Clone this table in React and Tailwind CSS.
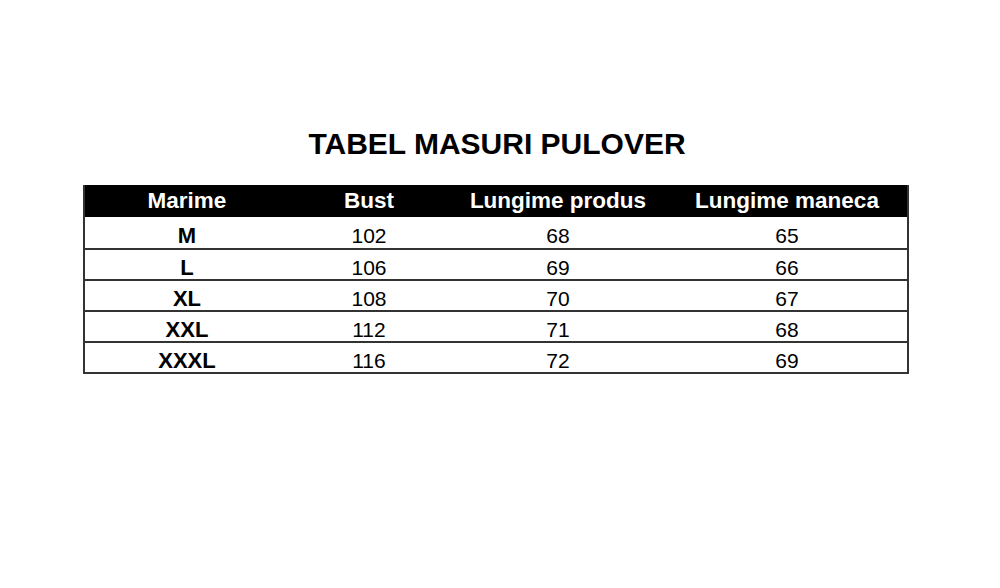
import React from "react";

const rows = [
  { size: "M", bust: 102, length: 68, sleeve: 65 },
  { size: "L", bust: 106, length: 69, sleeve: 66 },
  { size: "XL", bust: 108, length: 70, sleeve: 67 },
  { size: "XXL", bust: 112, length: 71, sleeve: 68 },
  { size: "XXXL", bust: 116, length: 72, sleeve: 69 },
];

const cols = "grid grid-cols-[204px_160px_218px_240px]";

export default function App() {
  return (
    <div className="w-[1000px] h-[588px] bg-white text-black font-['Liberation_Sans',Arial,sans-serif]">
      <div className="pt-[129px] flex justify-center pr-[6px]">
        <h1 className="text-[30px] leading-none font-bold">TABEL MASURI PULOVER</h1>
      </div>

      <div className="mt-[26px] ml-[83px] w-[826px] border-x-2 border-b-2 border-[#333]">
        {/* header */}
        <div className={`${cols} h-[32px] bg-black text-white text-[22.5px] font-bold leading-none`}>
          <div className="flex items-center justify-center pt-[1px]">Marime</div>
          <div className="flex items-center justify-center pt-[1px]">Bust</div>
          <div className="flex items-center justify-center pt-[1px]">Lungime produs</div>
          <div className="flex items-center justify-center pt-[1px]">Lungime maneca</div>
        </div>

        {rows.map((r, i) => (
          <div
            key={r.size}
            className={`${cols} h-[31px] leading-none ${i > 0 ? "border-t-2 border-[#333]" : ""}`}
          >
            <div className="flex items-center justify-center pt-[6px] text-[22px] font-bold">{r.size}</div>
            <div className="flex items-center justify-center pt-[6px] text-[21px]">{r.bust}</div>
            <div className="flex items-center justify-center pt-[6px] text-[21px]">{r.length}</div>
            <div className="flex items-center justify-center pt-[6px] text-[21px]">{r.sleeve}</div>
          </div>
        ))}
      </div>
    </div>
  );
}
